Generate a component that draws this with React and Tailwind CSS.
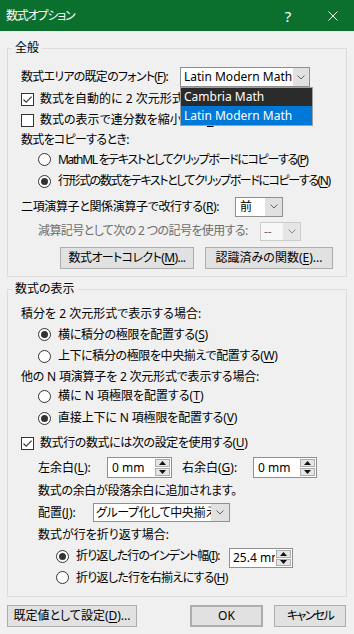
import React from "react";

const U = ({ children }) => (
  <span className="underline decoration-1 underline-offset-[2px]">{children}</span>
);

function Checkbox({ checked }) {
  return (
    <span className="w-[13px] h-[13px] border border-[#333333] bg-white flex items-center justify-center shrink-0">
      {checked && (
        <svg width="11" height="11" viewBox="0 0 11 11">
          <path d="M1.5 5.5 L4.2 8.2 L9.6 2.6" fill="none" stroke="#333333" strokeWidth="1.1" />
        </svg>
      )}
    </span>
  );
}

function Radio({ checked }) {
  return (
    <span className="w-[13px] h-[13px] rounded-full border border-[#333333] bg-white flex items-center justify-center shrink-0">
      {checked && <span className="w-[7px] h-[7px] rounded-full bg-[#333333]" />}
    </span>
  );
}

function Chevron({ color = "#606060" }) {
  return (
    <svg width="8" height="5" viewBox="0 0 8 5">
      <path d="M0.5 0.5 L4 4 L7.5 0.5" fill="none" stroke={color} strokeWidth="1" />
    </svg>
  );
}

function SpinBtns() {
  return (
    <div className="w-[17px] flex flex-col gap-[1px] p-[1px] shrink-0">
      <div className="flex-1 bg-[#e5e5e5] border border-[#adadad] flex items-center justify-center">
        <svg width="7" height="4" viewBox="0 0 7 4">
          <path d="M0 4 L3.5 0 L7 4 Z" fill="#111111" />
        </svg>
      </div>
      <div className="flex-1 bg-[#e5e5e5] border border-[#adadad] flex items-center justify-center">
        <svg width="7" height="4" viewBox="0 0 7 4">
          <path d="M0 0 L3.5 4 L7 0 Z" fill="#111111" />
        </svg>
      </div>
    </div>
  );
}

function Btn({ children, className = "" }) {
  return (
    <div
      className={`h-[22px] bg-[#e1e1e1] border border-[#adadad] flex items-center justify-center leading-[16px] whitespace-nowrap ${className}`}
    >
      {children}
    </div>
  );
}

export default function App() {
  return (
    <div className="w-[354px] h-[634px] bg-[#f0f0f0] text-[12px] text-black font-['Noto_Sans','Noto_Sans_CJK_JP',sans-serif] [font-feature-settings:'palt'] overflow-hidden">
      {/* Title bar */}
      <div className="h-[31px] bg-[#0b702d] flex items-center text-white">
        <span className="pl-[6px] leading-[16px] tracking-[-1.2px]">数式オプション</span>
        <span className="ml-auto w-[12px] text-center text-[15px] leading-[16px] mr-[34px]">?</span>
        <svg width="10" height="10" viewBox="0 0 10 10" className="mr-[16px]">
          <path d="M0.5 0.5 L9.5 9.5 M9.5 0.5 L0.5 9.5" stroke="#ffffff" strokeWidth="1" />
        </svg>
      </div>

      <div className="px-[7px]">
        {/* Group 1 */}
        <fieldset className="mt-[9px] border border-[#dcdcdc] p-0 m-0">
          <legend className="ml-[4px] px-[3px] leading-[16px]">全般</legend>
          <div className="pl-[13px] pt-[10px] pb-[7px]">
            <div className="h-[22px] flex items-center">
              <span className="w-[159px] leading-[16px] whitespace-nowrap tracking-[-0.75px]">
                数式エリアの既定のフォント(<U>F</U>):
              </span>
              <div className="relative">
                <div className="w-[130px] h-[20px] border border-[#8f8f8f] bg-white flex">
                  <span className="flex-1 pl-[3px] leading-[18px] whitespace-nowrap overflow-hidden">
                    Latin Modern Math
                  </span>
                  <span className="w-[16px] bg-[#e1e1e1] flex items-center justify-center">
                    <Chevron />
                  </span>
                </div>
                <div className="absolute left-0 top-[20px] w-[133px] z-10 border border-[#a0a0a0] bg-white">
                  <div className="h-[18px] bg-[#2b2b2b] text-white pl-[3px] leading-[18px] whitespace-nowrap">
                    Cambria Math
                  </div>
                  <div className="h-[19px] bg-[#0078d7] text-white pl-[3px] leading-[19px] whitespace-nowrap">
                    Latin Modern Math
                  </div>
                </div>
              </div>
            </div>

            <div className="h-[22px] flex items-center gap-[6px]">
              <Checkbox checked />
              <span className="leading-[16px] whitespace-nowrap">
                数式を自動的に 2 次元形式に変更する(<U>A</U>)
              </span>
            </div>
            <div className="h-[20px] flex items-center gap-[6px]">
              <Checkbox />
              <span className="leading-[16px] whitespace-nowrap">
                数式の表示で連分数を縮小する(<U>S</U>)
              </span>
            </div>
            <div className="h-[19px] flex items-center leading-[16px] tracking-[-0.7px]">数式をコピーするとき:</div>
            <div className="h-[21px] flex items-center gap-[7px] pl-[17px]">
              <Radio />
              <span className="leading-[16px] whitespace-nowrap tracking-[-1.3px]">
                MathML をテキストとしてクリップボードにコピーする(<U>P</U>)
              </span>
            </div>
            <div className="h-[22px] flex items-center gap-[7px] pl-[17px]">
              <Radio checked />
              <span className="leading-[16px] whitespace-nowrap tracking-[-1.4px]">
                行形式の数式をテキストとしてクリップボードにコピーする(<U>N</U>)
              </span>
            </div>
            <div className="h-[29px] flex items-center">
              <span className="w-[214px] leading-[16px] whitespace-nowrap tracking-[-0.35px]">
                二項演算子と関係演算子で改行する(<U>R</U>):
              </span>
              <div className="w-[48px] h-[20px] border border-[#8f8f8f] bg-white flex">
                <span className="flex-1 pl-[4px] leading-[18px]">前</span>
                <span className="w-[17px] bg-[#e1e1e1] flex items-center justify-center">
                  <Chevron />
                </span>
              </div>
            </div>
            <div className="h-[20px] flex items-center pl-[17px]">
              <span className="w-[222px] leading-[16px] whitespace-nowrap text-[#6d6d6d] tracking-[-0.6px]">
                減算記号として次の 2 つの記号を使用する:
              </span>
              <div className="w-[41px] h-[19px] border border-[#cccccc] bg-[#f7f7f7] flex">
                <span className="flex-1 pl-[3px] leading-[17px] text-[#6d6d6d]">--</span>
                <span className="w-[17px] bg-[#e5e5e5] flex items-center justify-center">
                  <Chevron color="#8a8a8a" />
                </span>
              </div>
            </div>
            <div className="mt-[6px] flex pl-[39px] gap-[11px]">
              <Btn className="w-[134px] tracking-[-0.6px]">
                数式オートコレクト(<U>M</U>)...
              </Btn>
              <Btn className="w-[128px]">
                認識済みの関数(<U>E</U>)...
              </Btn>
            </div>
          </div>
        </fieldset>

        {/* Group 2 */}
        <fieldset className="mt-[4px] border border-[#dcdcdc] p-0 m-0">
          <legend className="ml-[4px] px-[3px] leading-[16px]">数式の表示</legend>
          <div className="pl-[13px] pt-[6px] pb-[7px]">
            <div className="h-[21px] flex items-center leading-[16px]">積分を 2 次元形式で表示する場合:</div>
            <div className="h-[21px] flex items-center gap-[7px] pl-[17px]">
              <Radio checked />
              <span className="leading-[16px] tracking-[-0.25px]">
                横に積分の極限を配置する(<U>S</U>)
              </span>
            </div>
            <div className="h-[22px] flex items-center gap-[7px] pl-[17px]">
              <Radio />
              <span className="leading-[16px] tracking-[-0.4px]">
                上下に積分の極限を中央揃えで配置する(<U>W</U>)
              </span>
            </div>
            <div className="h-[19px] flex items-center leading-[16px] tracking-[-0.2px]">
              他の N 項演算子を 2 次元形式で表示する場合:
            </div>
            <div className="h-[20px] flex items-center gap-[7px] pl-[17px]">
              <Radio />
              <span className="leading-[16px]">
                横に N 項極限を配置する(<U>T</U>)
              </span>
            </div>
            <div className="h-[24px] flex items-center gap-[7px] pl-[17px]">
              <Radio checked />
              <span className="leading-[16px] tracking-[-0.15px]">
                直接上下に N 項極限を配置する(<U>V</U>)
              </span>
            </div>
            <div className="h-[26px] flex items-center gap-[6px]">
              <Checkbox checked />
              <span className="leading-[16px] tracking-[-0.4px]">
                数式行の数式には次の設定を使用する(<U>U</U>)
              </span>
            </div>
            <div className="h-[23px] flex items-center pl-[17px]">
              <span className="w-[69px] leading-[16px] whitespace-nowrap">
                左余白(<U>L</U>):
              </span>
              <div className="w-[65px] h-[21px] border border-[#8f8f8f] bg-white flex">
                <span className="flex-1 pl-[4px] leading-[19px] whitespace-nowrap overflow-hidden">0 mm</span>
                <SpinBtns />
              </div>
              <span className="ml-[10px] w-[71px] leading-[16px] whitespace-nowrap">
                右余白(<U>G</U>):
              </span>
              <div className="w-[64px] h-[21px] border border-[#8f8f8f] bg-white flex">
                <span className="flex-1 pl-[4px] leading-[19px] whitespace-nowrap overflow-hidden">0 mm</span>
                <SpinBtns />
              </div>
            </div>
            <div className="h-[23px] flex items-center pl-[17px] leading-[16px] tracking-[-0.3px]">
              数式の余白が段落余白に追加されます。
            </div>
            <div className="h-[21px] flex items-center pl-[17px]">
              <span className="w-[55px] leading-[16px] whitespace-nowrap">
                配置(<U>J</U>):
              </span>
              <div className="w-[137px] h-[19px] border border-[#8f8f8f] bg-white flex">
                <span className="flex-1 pl-[2px] leading-[17px] whitespace-nowrap overflow-hidden tracking-[-0.4px]">
                  グループ化して中央揃え
                </span>
                <span className="w-[18px] shrink-0 bg-[#e1e1e1] flex items-center justify-center">
                  <Chevron />
                </span>
              </div>
            </div>
            <div className="h-[23px] flex items-center pl-[17px] leading-[16px]">数式が行を折り返す場合:</div>
            <div className="h-[20px] flex items-center pl-[35px]">
              <Radio checked />
              <span className="ml-[7px] w-[153px] leading-[16px] whitespace-nowrap tracking-[-0.85px]">
                折り返した行のインデント幅(<U>I</U>):
              </span>
              <div className="w-[64px] h-[20px] border border-[#8f8f8f] bg-white flex mt-[4px]">
                <span className="flex-1 pl-[3px] leading-[18px] whitespace-nowrap overflow-hidden">25.4 mm</span>
                <SpinBtns />
              </div>
            </div>
            <div className="h-[23px] flex items-center gap-[7px] pl-[35px]">
              <Radio />
              <span className="leading-[16px] tracking-[-0.7px]">
                折り返した行を右揃えにする(<U>H</U>)
              </span>
            </div>
          </div>
        </fieldset>

        {/* Bottom buttons */}
        <div className="mt-[8px] flex">
          <Btn className="w-[130px]">
            既定値として設定(<U>D</U>)...
          </Btn>
          <Btn className="w-[73px] ml-[53px] border-2 border-[#0078d7]">OK</Btn>
          <Btn className="w-[72px] ml-[11px] tracking-[-1.6px]">キャンセル</Btn>
        </div>
      </div>
    </div>
  );
}
